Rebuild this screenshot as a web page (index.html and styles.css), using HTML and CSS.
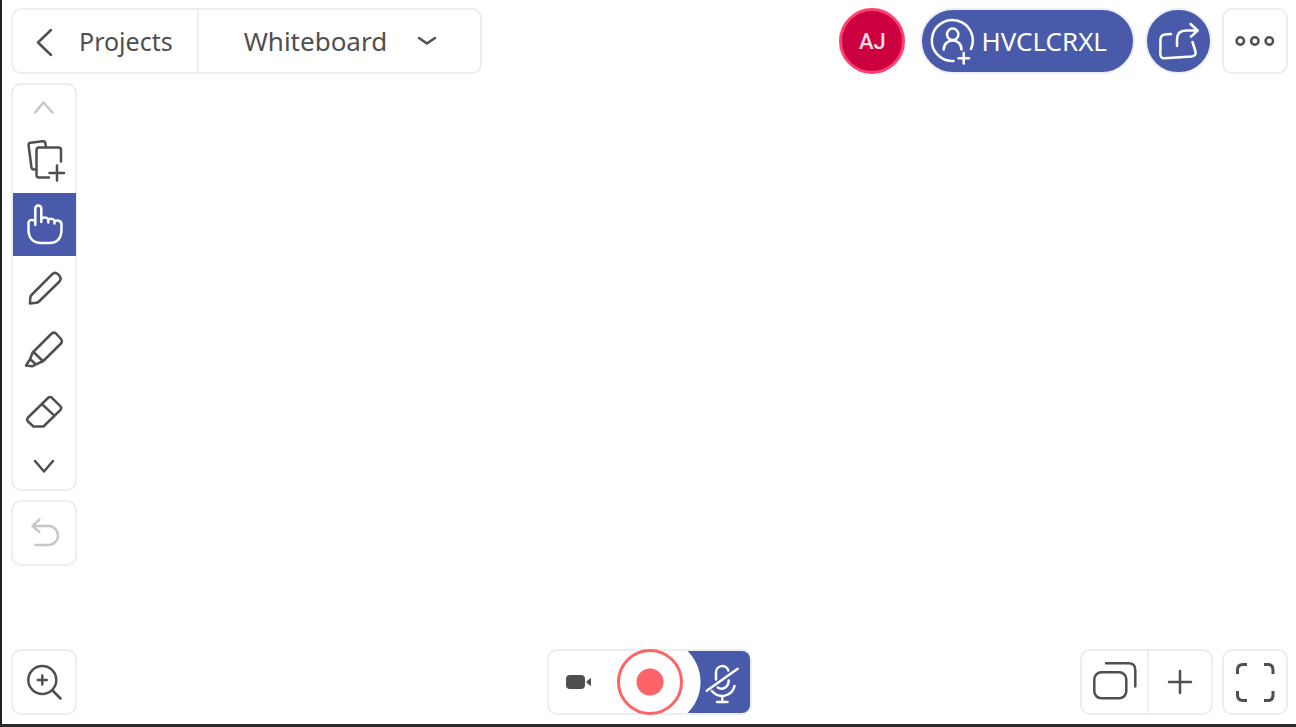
FILE: index.html
```
<!DOCTYPE html>
<html lang="en">
<head>
    <meta charset="UTF-8">
    <meta name="viewport" content="width=device-width, initial-scale=1.0">
    <title>Whiteboard</title>
    <link rel="stylesheet" href="styles.css">
</head>
<body>
    <header class="topbar">
        <nav class="panel">
            <a class="back" href="#">
                <svg class="icon" width="20" height="32" viewBox="0 0 20 32"><path d="M17 5L4 17.500L17 30"/></svg>
                Projects
            </a>
            <div class="board-picker">
                <select class="board-select" aria-label="Board">
                    <option>Whiteboard</option>
                </select>
                <svg class="icon board-arrow" width="20" height="12" viewBox="0 0 20 12"><path d="M2 3L10 8.500L18 3"/></svg>
            </div>
        </nav>

        <div class="session">
            <button type="button" class="avatar">AJ</button>
            <button type="button" class="pill">
                <svg class="icon" width="48" height="48" viewBox="0 0 48 48">
                    <path d="M24.500 44A20.500 20.500 0 1 1 42 32"/>
                    <circle cx="23.700" cy="17.300" r="5.700"/>
                    <path d="M14.700 32.500C15 20.500 32.300 20.500 32.500 32.500M34.700 36V46.500M29.500 41.300H40"/>
                </svg>
                HVCLCRXL
            </button>
            <button type="button" class="round" aria-label="Share">
                <svg class="icon" width="48" height="48" viewBox="0 0 48 48">
                    <path d="M16 17L10 17.500Q5.800 18 5.500 22L5.300 37Q5.500 41.500 9.500 41.300L36.500 39.500Q41.300 39 40.500 34.500L37.500 25"/>
                    <path d="M22 29V22.500Q22 13.500 31 13.500H42.500M35.500 7L42.700 13.500L36 19.700"/>
                </svg>
            </button>
            <button type="button" class="panel square" aria-label="More">
                <svg class="icon" width="40" height="40" viewBox="0 0 40 40">
                    <circle cx="5.300" cy="20" r="3.700"/>
                    <circle cx="19.800" cy="20" r="3.700"/>
                    <circle cx="34.300" cy="20" r="3.700"/>
                </svg>
            </button>
        </div>
    </header>

    <main class="side">
        <div class="panel tools">
            <button type="button" class="scroll-up" aria-label="Scroll up" disabled>
                <svg class="icon" width="24" height="16" viewBox="0 0 24 16"><path d="M3 12.500L11.500 2.500L20.500 12.500"/></svg>
            </button>
            <button type="button" class="tool" aria-label="Add page">
                <svg class="icon" width="40" height="63" viewBox="0 0 40 63">
                    <path d="M21.800 16L21.400 13.500Q21 11 18.500 11.300L6.500 12.800Q4.300 13.200 4.600 15.500L7.400 37Q7.800 39.600 10 39.500H12"/>
                    <path d="M37 31.500V20Q37 17.500 34.500 17.500H15Q12.500 17.500 12.500 20V45Q12.500 47.500 15 47.500H25M25.500 43H40M33 35.500V50.500"/>
                </svg>
            </button>
            <button type="button" class="tool active" aria-label="Select">
                <svg class="icon" width="40" height="63" viewBox="0 0 40 63">
                    <path d="M11.300 32V15.500a3 3 0 0 1 6 0V29M17.300 26C19 24 24 24 24.300 27V29.500M24.300 27C26 25 30.300 25.500 30.500 28.500V30.500M30.500 28.500C33 26.500 37.500 27.500 37.500 31.500V36C37.500 45 34 50 25.500 50H17.500C9 50 4.500 45 4.500 36.500V30C4.500 27 8 26 11.300 28"/>
                </svg>
            </button>
            <button type="button" class="tool" aria-label="Pencil">
                <svg class="icon" width="40" height="63" viewBox="0 0 40 63">
                    <path d="M6 47.500L6.300 41.500Q6.500 40 7.500 39L28 18.300Q31 15.500 34 18.300Q38.300 22 35.500 25.500L15.500 45Q14 46.500 12 46.800Z"/>
                </svg>
            </button>
            <button type="button" class="tool" aria-label="Highlighter">
                <svg class="icon" width="40" height="63" viewBox="0 0 40 63">
                    <path d="M2 46.500L6 40.300L8.700 33.500L27.700 14.500Q30 12.800 32 14.500L37 20Q38.800 22 37 24.500L19.300 42L12 45.300L8 47.300ZM9.500 33L18.800 42M6 40L12 45.500"/>
                </svg>
            </button>
            <button type="button" class="tool" aria-label="Eraser">
                <svg class="icon" width="40" height="63" viewBox="0 0 40 63">
                    <path d="M24.500 15.500Q26.300 14.300 28 15.800L36.500 24.300Q38 26 36.500 27.800L19.500 44.500H9.500L4 39.500Q2.300 37.500 4 35.500ZM18.300 22.300L30.300 33.700"/>
                </svg>
            </button>
            <button type="button" class="scroll-down" aria-label="Scroll down">
                <svg class="icon" width="24" height="16" viewBox="0 0 24 16"><path d="M3 2L12 12.500L21 2"/></svg>
            </button>
        </div>
        <button type="button" class="panel square" aria-label="Undo" disabled>
            <svg class="icon" width="40" height="40" viewBox="0 0 40 40">
                <path d="M15.300 6.700L8.500 13L15.300 19M8.500 13H24.500a9.500 9.500 0 0 1 0 19H11.300"/>
            </svg>
        </button>
    </main>

    <footer class="bottombar">
        <div class="bottom-left">
            <button type="button" class="panel square" aria-label="Zoom in">
                <svg class="icon" width="40" height="40" viewBox="0 0 40 40">
                    <circle cx="18.300" cy="18" r="14"/>
                    <path d="M28.500 28.500L36.500 36.500M18.300 13.500V22.500M13.800 18H22.800"/>
                </svg>
            </button>
        </div>

        <div class="panel recorder">
            <button type="button" class="camera" aria-label="Camera">
                <svg width="60" height="60" viewBox="0 0 60 60">
                    <rect x="13" y="23" width="19" height="14" rx="4" fill="currentColor"/>
                    <path d="M33.500 30L37.500 26.500V33.500Z" fill="currentColor" stroke="currentColor"/>
                </svg>
            </button>
            <button type="button" class="record" aria-label="Record"></button>
            <button type="button" class="mic" aria-label="Microphone off">
                <svg class="icon" width="61" height="60" viewBox="0 0 61 60">
                    <path d="M20.700 38.700L51.700 16.700M30 27.500V20a6.300 6.300 0 0 1 12.300-1.500M42.700 28.500C42.700 35 36.500 38.500 31.700 35.500M48.500 34C46 44.500 33 47.500 26 39M36.300 44V50M31 50H41.500"/>
                </svg>
            </button>
        </div>

        <div class="bottom-right">
            <div class="panel pages">
                <button type="button" class="page-list" aria-label="Pages">
                    <svg class="icon" width="51" height="50" viewBox="0 0 51 50">
                        <rect x="5.300" y="15.300" width="32" height="26" rx="7"/>
                        <path d="M17 6.300H39.500Q46.300 6.300 46.300 13V29.500"/>
                    </svg>
                </button>
                <button type="button" class="page-add" aria-label="Add">
                    <svg class="icon" width="24" height="24" viewBox="0 0 24 24"><path d="M12 1V23M1 12H23"/></svg>
                </button>
            </div>
            <button type="button" class="panel square" aria-label="Full screen">
                <svg class="icon corners" width="40" height="40" viewBox="0 0 40 40">
                    <path d="M2.500 12V8Q2.500 2.500 8 2.500H12M29 2.500H33Q38 2.500 38 8V12M38 29V33Q38 38.500 33 38.500H29M12 38.500H8Q2.500 38.500 2.500 33V29"/>
                </svg>
            </button>
        </div>
    </footer>
</body>
</html>
```

FILE: styles.css
```
* {
    box-sizing: border-box;
}
body {
    display: flex;
    flex-direction: column;
    min-height: 100vh;
    margin: 0;
    padding: 8px 8px 9px 9px;
    border-left: 2px solid #222122;
    border-bottom: 3px solid #2e2b2d;
    background-color: #fff;
    color: #4f4f4f;
    font-family: "Noto Sans", sans-serif;
    font-size: 25px;
}
button, select {
    padding: 0;
    border: none;
    background: none;
    color: inherit;
    font: inherit;
    cursor: pointer;
}
button {
    display: flex;
    align-items: center;
    justify-content: center;
}
button:disabled {
    color: #c8c8c8;
}
.icon {
    fill: none;
    stroke: currentColor;
    stroke-width: 2.5;
    stroke-linecap: round;
    stroke-linejoin: round;
    overflow: visible;
}
.panel {
    display: flex;
    border: 2px solid #ebeef2;
    border-radius: 10px;
    background-color: #fff;
}
.square {
    width: 66px;
    height: 66px;
}

/* top bar */
.topbar {
    display: flex;
    justify-content: space-between;
}
.back {
    display: flex;
    align-items: center;
    gap: 25px;
    height: 62px;
    padding: 0 24px 0 21px;
    border-right: 2px solid #ebeef2;
    color: inherit;
    text-decoration: none;
}
.board-picker {
    position: relative;
}
.board-select {
    width: 281px;
    height: 62px;
    padding-left: 45px;
    font-size: 26px;
    appearance: none;
}
.board-arrow {
    position: absolute;
    top: 25px;
    right: 43px;
    pointer-events: none;
}
.session {
    display: flex;
    gap: 10px;
}
.avatar {
    width: 66px;
    height: 66px;
    margin-right: 5px;
    border: 3px solid #ff4172;
    border-radius: 50%;
    background-color: #cc0040;
    color: #f3dbe3;
    font-family: Roboto, sans-serif;
    font-size: 22px;
    font-weight: 500;
}
.pill, .round {
    height: 66px;
    border: 2px solid #ebeef5;
    border-radius: 33px;
    background-color: #4a5aab;
    color: #fff;
}
.pill {
    gap: 4px;
    padding: 0 26px 0 7px;
    font-size: 26px;
}
.round {
    width: 67px;
}

/* side tools */
.side {
    display: flex;
    flex: 1;
    flex-direction: column;
    align-items: flex-start;
    gap: 9px;
    padding: 9px 0;
}
.tools {
    flex-direction: column;
    width: 66px;
}
.tool {
    height: 63px;
}
.active {
    background-color: #4a5aab;
    box-shadow: 1px 0 #4a5aab;
    color: #fff;
}
.scroll-up {
    height: 45px;
}
.scroll-down {
    height: 44px;
}

/* bottom bar */
.bottombar {
    display: flex;
    align-items: flex-end;
}
.bottom-left, .bottom-right {
    display: flex;
    flex: 1;
}
.bottom-right {
    justify-content: flex-end;
    gap: 9px;
}
.recorder {
    height: 66px;
}
.camera {
    width: 68px;
}
.record {
    width: 66px;
    height: 66px;
    margin: -2px 0;
    border: 3px solid #fc6467;
    border-radius: 50%;
    background: radial-gradient(circle, #fc6467 13px, #fff 14px);
}
.mic {
    width: 67px;
    border-radius: 0 8px 8px 0;
    background: radial-gradient(circle at -26px 50%, #fff 43px, #4a5aab 44px);
    color: #fff;
}
.page-list {
    width: 67px;
    border-right: 2px solid #ebeef2;
}
.page-add {
    width: 62px;
}
.corners {
    stroke-width: 3;
    stroke-linecap: butt;
}
```
